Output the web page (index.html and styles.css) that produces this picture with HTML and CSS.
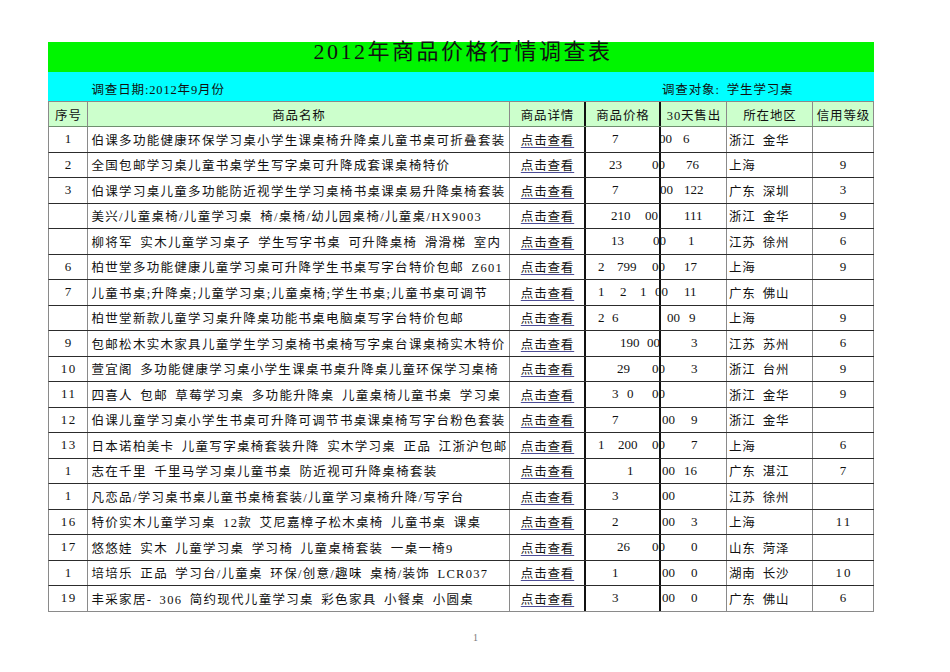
FILE: index.html
```html
<!DOCTYPE html>
<html lang="zh-CN">
<head>
<meta charset="utf-8">
<title>2012年商品价格行情调查表</title>
<link rel="stylesheet" href="styles.css">
</head>
<body>
<div class="sheet">
  <div class="title">2012年商品价格行情调查表</div>
  <div class="info"><span class="date">调查日期:2012年9月份</span><span class="target">调查对象: 学生学习桌</span></div>
  <div class="row head">
    <div class="c c1">序号</div><div class="c c2 ctr">商品名称</div><div class="c c3">商品详情</div><div class="c c4 ctr">商品价格</div><div class="c c5 ctr">30天售出</div><div class="c c6 ctr">所在地区</div><div class="c c7 ctr">信用等级</div>
  </div>

  <div class="row">
    <div class="c c1 num">1</div><div class="c c2 name">伯课多功能健康环保学习桌小学生课桌椅升降桌儿童书桌可折叠套装</div><div class="c c3"><a href="#">点击查看</a></div>
    <div class="c c4 price"><span class="x26">7</span><span class="x73">00</span></div><div class="c c5 sold"><span class="x22">6</span></div>
    <div class="c c6 region">浙江 金华</div><div class="c c7 num"></div>
  </div>
  <div class="row">
    <div class="c c1 num">2</div><div class="c c2 name">全国包邮学习桌儿童书桌学生写字桌可升降成套课桌椅特价</div><div class="c c3"><a href="#">点击查看</a></div>
    <div class="c c4 price"><span class="x23">23</span><span class="x66">00</span></div><div class="c c5 sold"><span class="x25">76</span></div>
    <div class="c c6 region">上海</div><div class="c c7 num">9</div>
  </div>
  <div class="row">
    <div class="c c1 num">3</div><div class="c c2 name">伯课学习桌儿童多功能防近视学生学习桌椅书桌课桌易升降桌椅套装</div><div class="c c3"><a href="#">点击查看</a></div>
    <div class="c c4 price"><span class="x26">7</span><span class="x74">00</span></div><div class="c c5 sold"><span class="x23">122</span></div>
    <div class="c c6 region">广东 深圳</div><div class="c c7 num">3</div>
  </div>
  <div class="row">
    <div class="c c1 num"></div><div class="c c2 name">美兴/儿童桌椅/儿童学习桌 椅/桌椅/幼儿园桌椅/儿童桌/HX9003</div><div class="c c3"><a href="#">点击查看</a></div>
    <div class="c c4 price"><span class="x25">210</span><span class="x59">00</span></div><div class="c c5 sold"><span class="x23">111</span></div>
    <div class="c c6 region">浙江 金华</div><div class="c c7 num">9</div>
  </div>
  <div class="row">
    <div class="c c1 num"></div><div class="c c2 name">柳将军 实木儿童学习桌子 学生写字书桌 可升降桌椅 滑滑梯 室内</div><div class="c c3"><a href="#">点击查看</a></div>
    <div class="c c4 price"><span class="x25">13</span><span class="x67">00</span></div><div class="c c5 sold"><span class="x27">1</span></div>
    <div class="c c6 region">江苏 徐州</div><div class="c c7 num">6</div>
  </div>
  <div class="row">
    <div class="c c1 num">6</div><div class="c c2 name">柏世堂多功能健康儿童学习桌可升降学生书桌写字台特价包邮 Z601</div><div class="c c3"><a href="#">点击查看</a></div>
    <div class="c c4 price"><span class="x12">2</span><span class="x31">799</span><span class="x66">00</span></div><div class="c c5 sold"><span class="x23">17</span></div>
    <div class="c c6 region">上海</div><div class="c c7 num">9</div>
  </div>
  <div class="row">
    <div class="c c1 num">7</div><div class="c c2 name">儿童书桌;升降桌;儿童学习桌;儿童桌椅;学生书桌;儿童书桌可调节</div><div class="c c3"><a href="#">点击查看</a></div>
    <div class="c c4 price"><span class="x12">1</span><span class="x34">2</span><span class="x54">1</span><span class="x69">00</span></div><div class="c c5 sold"><span class="x23">11</span></div>
    <div class="c c6 region">广东 佛山</div><div class="c c7 num"></div>
  </div>
  <div class="row">
    <div class="c c1 num"></div><div class="c c2 name">柏世堂新款儿童学习桌升降桌功能书桌电脑桌写字台特价包邮</div><div class="c c3"><a href="#">点击查看</a></div>
    <div class="c c4 price"><span class="x12">2</span><span class="x26">6</span><span class="x81">00</span></div><div class="c c5 sold"><span class="x28">9</span></div>
    <div class="c c6 region">上海</div><div class="c c7 num">9</div>
  </div>
  <div class="row">
    <div class="c c1 num">9</div><div class="c c2 name">包邮松木实木家具儿童学生学习桌椅书桌椅写字桌台课桌椅实木特价</div><div class="c c3"><a href="#">点击查看</a></div>
    <div class="c c4 price"><span class="x34">190</span><span class="x61">00</span></div><div class="c c5 sold"><span class="x30">3</span></div>
    <div class="c c6 region">江苏 苏州</div><div class="c c7 num">6</div>
  </div>
  <div class="row">
    <div class="c c1 num w">10</div><div class="c c2 name">萱宜阁 多功能健康学习桌小学生课桌书桌升降桌儿童环保学习桌椅</div><div class="c c3"><a href="#">点击查看</a></div>
    <div class="c c4 price"><span class="x31">29</span><span class="x66">00</span></div><div class="c c5 sold"><span class="x30">3</span></div>
    <div class="c c6 region">浙江 台州</div><div class="c c7 num">9</div>
  </div>
  <div class="row">
    <div class="c c1 num w">11</div><div class="c c2 name">四喜人 包邮 草莓学习桌 多功能升降桌 儿童桌椅儿童书桌 学习桌</div><div class="c c3"><a href="#">点击查看</a></div>
    <div class="c c4 price"><span class="x26">3</span><span class="x41">0</span><span class="x66">00</span></div><div class="c c5 sold"></div>
    <div class="c c6 region">浙江 金华</div><div class="c c7 num">9</div>
  </div>
  <div class="row">
    <div class="c c1 num w">12</div><div class="c c2 name">伯课儿童学习桌小学生书桌可升降可调节书桌课桌椅写字台粉色套装</div><div class="c c3"><a href="#">点击查看</a></div>
    <div class="c c4 price"><span class="x26">7</span><span class="x76">00</span></div><div class="c c5 sold"><span class="x30">9</span></div>
    <div class="c c6 region">浙江 金华</div><div class="c c7 num"></div>
  </div>
  <div class="row">
    <div class="c c1 num w">13</div><div class="c c2 name">日本诺柏美卡 儿童写字桌椅套装升降 实木学习桌 正品 江浙沪包邮</div><div class="c c3"><a href="#">点击查看</a></div>
    <div class="c c4 price"><span class="x12">1</span><span class="x32">200</span><span class="x66">00</span></div><div class="c c5 sold"><span class="x30">7</span></div>
    <div class="c c6 region">上海</div><div class="c c7 num">6</div>
  </div>
  <div class="row">
    <div class="c c1 num">1</div><div class="c c2 name">志在千里 千里马学习桌儿童书桌 防近视可升降桌椅套装</div><div class="c c3"><a href="#">点击查看</a></div>
    <div class="c c4 price"><span class="x41">1</span><span class="x76">00</span></div><div class="c c5 sold"><span class="x23">16</span></div>
    <div class="c c6 region">广东 湛江</div><div class="c c7 num">7</div>
  </div>
  <div class="row">
    <div class="c c1 num">1</div><div class="c c2 name">凡恋品/学习桌书桌儿童书桌椅套装/儿童学习桌椅升降/写字台</div><div class="c c3"><a href="#">点击查看</a></div>
    <div class="c c4 price"><span class="x26">3</span><span class="x76">00</span></div><div class="c c5 sold"></div>
    <div class="c c6 region">江苏 徐州</div><div class="c c7 num"></div>
  </div>
  <div class="row">
    <div class="c c1 num w">16</div><div class="c c2 name">特价实木儿童学习桌 12款 艾尼嘉樟子松木桌椅 儿童书桌 课桌</div><div class="c c3"><a href="#">点击查看</a></div>
    <div class="c c4 price"><span class="x26">2</span><span class="x76">00</span></div><div class="c c5 sold"><span class="x30">3</span></div>
    <div class="c c6 region">上海</div><div class="c c7 num ww">11</div>
  </div>
  <div class="row">
    <div class="c c1 num w">17</div><div class="c c2 name">悠悠娃 实木 儿童学习桌 学习椅 儿童桌椅套装 一桌一椅9</div><div class="c c3"><a href="#">点击查看</a></div>
    <div class="c c4 price"><span class="x31">26</span><span class="x66">00</span></div><div class="c c5 sold"><span class="x30">0</span></div>
    <div class="c c6 region">山东 菏泽</div><div class="c c7 num"></div>
  </div>
  <div class="row">
    <div class="c c1 num">1</div><div class="c c2 name">培培乐 正品 学习台/儿童桌 环保/创意/趣味 桌椅/装饰 LCR037</div><div class="c c3"><a href="#">点击查看</a></div>
    <div class="c c4 price"><span class="x26">1</span><span class="x76">00</span></div><div class="c c5 sold"><span class="x30">0</span></div>
    <div class="c c6 region">湖南 长沙</div><div class="c c7 num ww">10</div>
  </div>
  <div class="row last">
    <div class="c c1 num w">19</div><div class="c c2 name">丰采家居- 306 简约现代儿童学习桌 彩色家具 小餐桌 小圆桌</div><div class="c c3"><a href="#">点击查看</a></div>
    <div class="c c4 price"><span class="x26">3</span><span class="x76">00</span></div><div class="c c5 sold"><span class="x30">0</span></div>
    <div class="c c6 region">广东 佛山</div><div class="c c7 num">6</div>
  </div>
</div>
<div class="page">1</div>
</body>
</html>
```

FILE: styles.css
```css
* { box-sizing: border-box; }

body {
  margin: 0;
  background: #ffffff;
  color: #111111;
  font-family: "Liberation Serif", "Noto Sans CJK SC", serif;
  font-size: 12.5px;
}

.sheet {
  width: 826px;
  margin: 42px 0 0 48px;
}

.title {
  height: 30px;
  background: #00f500;
  text-align: center;
  font-size: 22px;
  line-height: 19px;
  letter-spacing: 2.5px;
  padding-left: 4px;
}

.info {
  height: 29px;
  background: #00ffff;
  display: grid;
  grid-template-columns: 1px 39px 422px 76px 75px 66px 86px 61px;
  align-items: center;
  padding-top: 3px;
  letter-spacing: 0.85px;
  word-spacing: 3px;
}

.info .date {
  grid-column: 3;
  padding-left: 3.5px;
}

.info .target {
  grid-column: 6 / 9;
  padding-left: 1px;
  white-space: nowrap;
}

.row {
  display: grid;
  grid-template-columns: 39px 422px 76px 75px 66px 86px 61px;
  height: 25.5px;
  border-left: 1px solid #8a8a8a;
  border-bottom: 1px solid #2c2c2c;
}

.row.head {
  height: 26px;
  background: #ccffcc;
  border-top: 1px solid #8a8a8a;
  border-bottom: 1px solid #6f8f6f;
}

.row.last {
  border-bottom: 1px solid #8a8a8a;
}

.c {
  display: flex;
  align-items: center;
  border-right: 1px solid #8a8a8a;
  min-width: 0;
  white-space: nowrap;
  letter-spacing: 0.85px;
  word-spacing: 3px;
}

.head .c {
  justify-content: center;
  padding-left: 0.85px;
}

.c3, .c4 {
  border-right: 2px solid #111111;
}

.c1, .c7 { justify-content: center; }
.c3 { justify-content: center; padding-left: 1px; }

.num {
  font-size: 13px;
  letter-spacing: 0;
}

.num.w {
  letter-spacing: 1.5px;
  padding-left: 1.5px;
}

.num.ww {
  letter-spacing: 2px;
  padding-left: 2px;
}

.name {
  padding-left: 3.5px;
  letter-spacing: 1.3px;
  overflow: visible;
}

.region {
  padding-left: 2px;
}

a {
  color: #141414;
  text-decoration: underline;
  text-decoration-color: #4d4d96;
  text-underline-offset: 2px;
}

.price, .sold {
  display: grid;
  grid-template-columns: 100%;
  align-items: center;
  font-size: 13px;
  letter-spacing: 0;
  overflow: visible;
}

.price span, .sold span {
  grid-area: 1 / 1;
  justify-self: start;
  white-space: nowrap;
}

.x12 { margin-left: 12px; }
.x22 { margin-left: 22px; }
.x23 { margin-left: 23px; }
.x24 { margin-left: 24px; }
.x25 { margin-left: 25px; }
.x26 { margin-left: 26px; }
.x27 { margin-left: 27px; }
.x28 { margin-left: 28px; }
.x30 { margin-left: 30px; }
.x31 { margin-left: 31px; }
.x32 { margin-left: 32px; }
.x34 { margin-left: 34px; }
.x41 { margin-left: 41px; }
.x54 { margin-left: 54px; }
.x59 { margin-left: 59px; }
.x61 { margin-left: 61px; }
.x66 { margin-left: 66px; }
.x67 { margin-left: 67px; }
.x69 { margin-left: 69px; }
.x73 { margin-left: 73px; }
.x74 { margin-left: 74px; }
.x76 { margin-left: 76px; }
.x81 { margin-left: 81px; }

.page {
  margin: 20px 0 0 473px;
  font-size: 10px;
  color: #777777;
}
```
